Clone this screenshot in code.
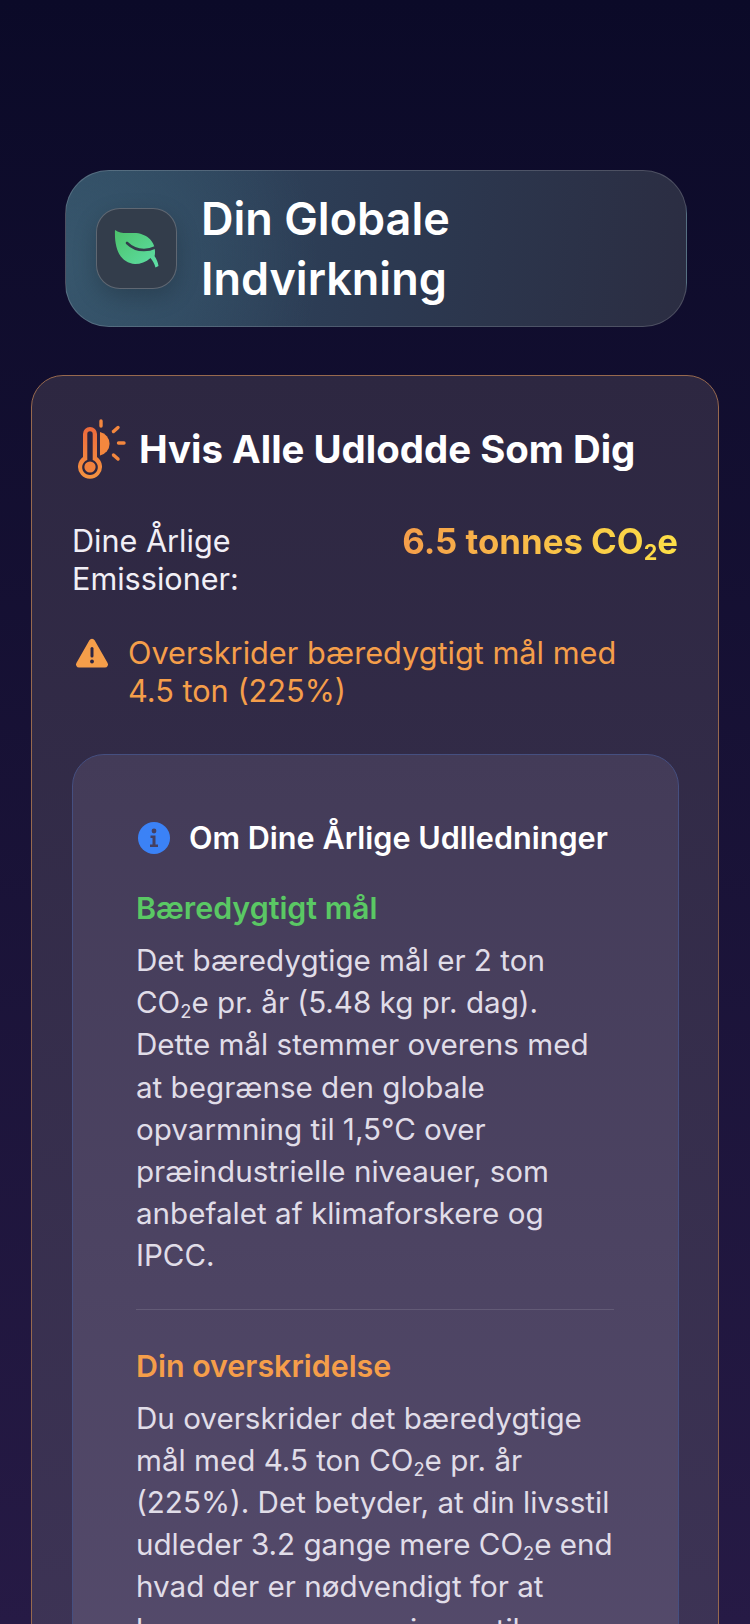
<div class="screen">
	<header class="hero">
		<div class="hero-icon">
			<svg class="leaf" viewBox="0 0 45 38" width="45" height="38">
				<defs>
					<linearGradient id="leaf" x1="0" y1="0" x2="1" y2="1">
						<stop offset="0" stop-color="#4cc26a" />
						<stop offset="1" stop-color="#5fe0a8" />
					</linearGradient>
				</defs>
				<path fill="url(#leaf)" d="M1 0C6 4 12 3 20 3c12 0 21 8 21 18 0 2 0 4-.5 5 2 3 3.500 6 4 10l-3 1.500c-1-4-3-7-5-9.500-4.500 4-10 6-15.500 6C8 33 0 22 1 0z" />
				<path fill="none" stroke="#333d4b" stroke-width="2.6" stroke-linecap="round" d="M13 13c5 5 11 7 17 7 3 0 7-.5 11-2.500" />
			</svg>
		</div>
		<h1>Din Globale Indvirkning</h1>
	</header>

	<section class="card">
		<div class="card-head">
			<svg class="thermo" viewBox="0 0 52 62" width="52" height="62">
				<defs>
					<linearGradient id="heat" x1="0" y1="0" x2="0" y2="1">
						<stop offset="0" stop-color="#ec6a3c" />
						<stop offset="1" stop-color="#f49340" />
					</linearGradient>
				</defs>
				<path fill="url(#heat)" d="M7 39V16a7 7 0 0 1 14 0v23a12 12 0 1 1-14 0z" />
				<path fill="#2c2640" d="M11.300 42V16a2.700 2.700 0 0 1 5.400 0v26a7.800 7.800 0 1 1-5.400 0z" />
				<circle cx="14" cy="49" r="5.600" fill="#f0813d" />
				<path fill="#f4873e" d="M24 14a12 12 0 0 1 0 23.500z" />
				<g stroke="#f4873e" stroke-width="3.400" stroke-linecap="round" fill="none">
					<path d="M25 3v5" />
					<path d="M37.500 13.500l4.500-4" />
					<path d="M42.500 25h5.500" />
					<path d="M37.500 37l4.500 4" />
				</g>
			</svg>
			<h2>Hvis Alle Udlodde Som Dig</h2>
		</div>

		<div class="emissions">
			<span class="em-label">Dine Årlige Emissioner:</span>
			<span class="em-value">6.5 tonnes CO<sub>2</sub>e</span>
		</div>

		<div class="warning">
			<svg viewBox="0 0 34 30" width="34" height="30">
				<path fill="#f59e4a" d="M14.400 2.200a3 3 0 0 1 5.200 0l13 22.800a3 3 0 0 1-2.600 4.500H4a3 3 0 0 1-2.600-4.500z" />
				<rect x="15.500" y="9" width="3" height="10.500" rx="1.500" fill="#2d2644" />
				<circle cx="17" cy="23.500" r="1.900" fill="#2d2644" />
			</svg>
			<p>Overskrider bæredygtigt mål med 4.5 ton (225%)</p>
		</div>

		<div class="info">
			<div class="info-head">
				<svg viewBox="0 0 32 32" width="32" height="32">
					<circle cx="16" cy="16" r="16" fill="#3b82f6" />
					<circle cx="16" cy="9" r="2.400" fill="#454060" />
					<path fill="#454060" d="M12.500 13.500h5v9h2.500v2.500h-8v-2.500h2.500v-6.500h-2z" />
				</svg>
				<h3>Om Dine Årlige Udlledninger</h3>
			</div>

			<h4 class="green">Bæredygtigt mål</h4>
			<p class="body">Det bæredygtige mål er 2 ton CO<sub>2</sub>e pr. år (5.48 kg pr. dag). Dette mål stemmer overens med at begrænse den globale opvarmning til 1,5°C over præindustrielle niveauer, som anbefalet af klimaforskere og IPCC.</p>

			<hr />

			<h4 class="orange">Din overskridelse</h4>
			<p class="body">Du overskrider det bæredygtige mål med 4.5 ton CO<sub>2</sub>e pr. år (225%). Det betyder, at din livsstil udleder 3.2 gange mere CO<sub>2</sub>e end hvad der er nødvendigt for at begrænse opvarmningen til<br />1,5°C.</p>
		</div>
	</section>
</div>

<style>
	:global(body) {
		margin: 0;
		background: #0b0a28;
	}

	.screen {
		height: 1624px;
		overflow: hidden;
		box-sizing: border-box;
		padding: 170px 31px 0;
		background: linear-gradient(180deg, #0b0a28 0%, #261a45 100%);
		font-family: Inter, 'Noto Sans', sans-serif;
	}

	.hero {
		display: flex;
		align-items: center;
		gap: 24px;
		box-sizing: border-box;
		width: 622px;
		height: 157px;
		margin-left: 34px;
		padding: 0 30px;
		border: 1px solid rgba(255, 255, 255, 0.16);
		border-radius: 44px;
		background: radial-gradient(circle at 0% 60%, #37566c 0%, rgba(55, 86, 108, 0) 40%),
			linear-gradient(95deg, #2f4a62 0%, #2c3a52 50%, #2b2d42 100%);
	}

	.hero-icon {
		flex: none;
		display: flex;
		align-items: center;
		justify-content: center;
		box-sizing: border-box;
		width: 81px;
		height: 81px;
		border: 1px solid rgba(255, 255, 255, 0.22);
		border-radius: 24px;
		background: #333d4b;
		box-shadow: 0 8px 24px rgba(0, 0, 0, 0.2);
	}

	h1 {
		margin: 0;
		width: 340px;
		color: #fff;
		font-size: 45px;
		font-weight: 600;
		line-height: 60px;
	}

	.card {
		box-sizing: border-box;
		width: 688px;
		margin-top: 48px;
		padding: 42px 40px 120px;
		border: 1px solid #97694e;
		border-radius: 32px;
		background: linear-gradient(180deg, #2d2741 0%, #403659 100%);
	}

	.card-head {
		display: flex;
		align-items: center;
		gap: 11px;
		margin-left: 4px;
	}

	.thermo {
		flex: none;
	}

	h2 {
		margin: 0;
		color: #fff;
		font-size: 38.4px;
		font-weight: 700;
		white-space: nowrap;
	}

	sub {
		font-size: 0.62em;
		line-height: 0;
		vertical-align: -0.28em;
	}

	.emissions {
		display: flex;
		justify-content: space-between;
		margin-top: 42px;
	}

	.em-label {
		width: 240px;
		color: #f1eff6;
		font-size: 30.6px;
		line-height: 38px;
	}

	.em-value {
		height: 46px;
		background: linear-gradient(90deg, #f59e4a, #fde047);
		-webkit-background-clip: text;
		background-clip: text;
		color: transparent;
		font-size: 34.8px;
		font-weight: 700;
		line-height: 38px;
		white-space: nowrap;
	}

	.warning {
		display: flex;
		align-items: flex-start;
		gap: 19px;
		margin-top: 36px;
		color: #f59e4a;
		font-size: 30.7px;
		line-height: 38px;
	}

	.warning svg {
		flex: none;
		margin: 4px 0 0 3px;
	}

	.warning p {
		max-width: 500px;
		margin: 0;
	}

	.info {
		box-sizing: border-box;
		width: 607px;
		margin-top: 44px;
		padding: 64px 64px 80px 63px;
		border: 1px solid #454f80;
		border-radius: 32px;
		background: linear-gradient(180deg, #433b58 0%, #564c6d 100%);
	}

	.info-head {
		display: flex;
		align-items: center;
		gap: 19px;
	}

	.info-head svg {
		flex: none;
		margin-left: 2px;
	}

	h3 {
		margin: 0;
		color: #fff;
		font-size: 30.6px;
		font-weight: 600;
		white-space: nowrap;
	}

	h4 {
		margin: 33px 0 12px;
		font-size: 30.4px;
		font-weight: 600;
		line-height: 38px;
	}

	.green {
		color: #5ac864;
	}

	.orange {
		margin-top: 37px;
		color: #f59e4a;
	}

	.body {
		margin: 0;
		color: #e0dde8;
		font-size: 29.6px;
		line-height: 42.2px;
	}

	hr {
		margin: 32px 0 0;
		border: 0;
		border-top: 1px solid rgba(255, 255, 255, 0.12);
	}
</style>
